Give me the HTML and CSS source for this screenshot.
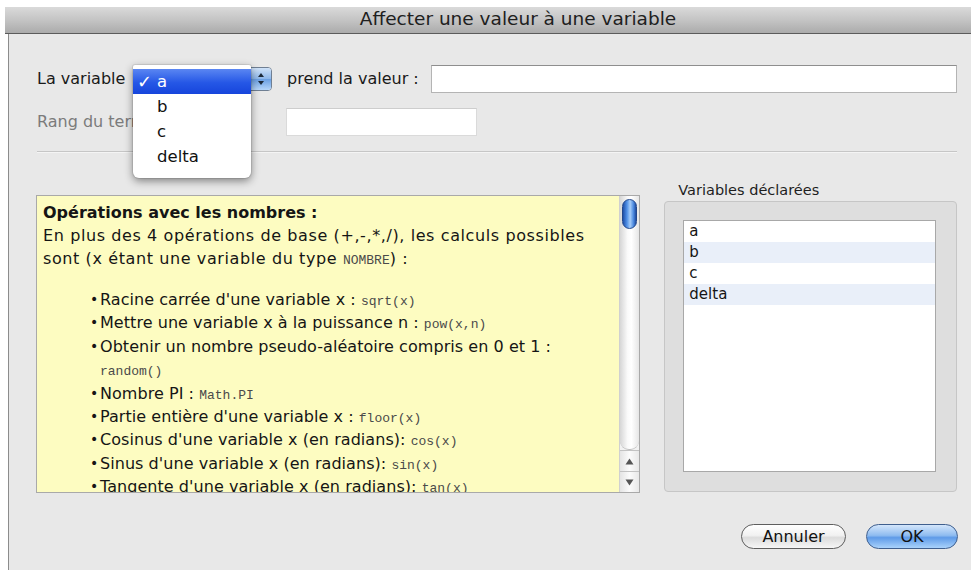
FILE: index.html
```html
<!DOCTYPE html>
<html lang="fr">
<head>
<meta charset="utf-8">
<title>Affecter une valeur à une variable</title>
<link rel="stylesheet" href="styles.css">
</head>
<body>
<div class="screen">
  <div class="window">
    <div class="titlebar">Affecter une valeur à une variable</div>
    <div class="content">
      <div class="form-row row-var">
        <span class="label label-var">La variable</span>
        <div class="popup">
          <span class="popup-value">a</span>
          <span class="popup-arrows">
            <svg width="8" height="14" viewBox="0 0 8 14"><path d="M4 1 L7 5 L1 5 Z" fill="#1d2a3a"/><path d="M4 13 L7 9 L1 9 Z" fill="#1d2a3a"/></svg>
          </span>
          <ul class="menu">
            <li class="menu-item selected"><span class="check">✓</span>a</li>
            <li class="menu-item">b</li>
            <li class="menu-item">c</li>
            <li class="menu-item">delta</li>
          </ul>
        </div>
        <span class="label label-value">prend la valeur :</span>
        <div class="field field-wide"></div>
      </div>
      <div class="form-row row-rank">
        <span class="label label-rank">Rang du terme de la liste :</span>
        <div class="field field-rank"></div>
      </div>
      <div class="separator"></div>
      <div class="lower">
        <div class="help">
          <div class="help-text">
            <p class="help-title">Opérations avec les nombres :</p>
            <p class="help-intro">En plus des 4 opérations de base (+,-,*,/), les calculs possibles sont (x étant une variable du type <code>NOMBRE</code>) :</p>
            <ul class="help-list">
              <li>Racine carrée d'une variable x : <code>sqrt(x)</code></li>
              <li>Mettre une variable x à la puissance n : <code>pow(x,n)</code></li>
              <li>Obtenir un nombre pseudo-aléatoire compris en 0 et 1 : <code>random()</code></li>
              <li>Nombre PI : <code>Math.PI</code></li>
              <li>Partie entière d'une variable x : <code>floor(x)</code></li>
              <li>Cosinus d'une variable x (en radians): <code>cos(x)</code></li>
              <li>Sinus d'une variable x (en radians): <code>sin(x)</code></li>
              <li>Tangente d'une variable x (en radians): <code>tan(x)</code></li>
              <li>Arrondir une variable x : <code>round(x)</code></li>
            </ul>
          </div>
          <div class="scrollbar">
            <div class="scroll-track"><div class="scroll-thumb"></div></div>
            <div class="scroll-btn">
              <svg width="9" height="7" viewBox="0 0 9 7"><path d="M4.5 0.5 L8.5 6.5 L0.5 6.5 Z" fill="#555"/></svg>
            </div>
            <div class="scroll-btn">
              <svg width="9" height="7" viewBox="0 0 9 7"><path d="M4.5 6.5 L8.5 0.5 L0.5 0.5 Z" fill="#555"/></svg>
            </div>
          </div>
        </div>
        <div class="vars">
          <div class="vars-title">Variables déclarées</div>
          <div class="vars-group">
            <ul class="vars-list">
              <li>a</li>
              <li class="alt">b</li>
              <li>c</li>
              <li class="alt">delta</li>
            </ul>
          </div>
        </div>
      </div>
      <div class="buttons">
        <button class="btn btn-cancel">Annuler</button>
        <button class="btn btn-ok">OK</button>
      </div>
    </div>
  </div>
</div>
</body>
</html>
```
FILE: styles.css
```css
* { box-sizing: border-box; }

html, body {
  margin: 0;
  padding: 0;
  background: #ffffff;
  width: 971px;
  height: 570px;
  overflow: hidden;
}

body {
  font-family: "DejaVu Sans", "Liberation Sans", sans-serif;
  color: #1a1a1a;
}

.screen {
  padding: 7px 0 0 5px;
  height: 570px;
}

.window {
  height: 563px;
  display: flex;
  flex-direction: column;
}

.titlebar {
  height: 27px;
  flex: none;
  background: linear-gradient(#dadada, #c4c4c4 50%, #ababab);
  border-bottom: 1px solid #5b5b5b;
  text-align: center;
  font-size: 18.5px;
  line-height: 24px;
  color: #202020;
  padding-left: 60px;
}

.content {
  flex: 1;
  margin-left: 3px;
  border-left: 1px solid #8c8c8c;
  background: #e8e8e8;
  padding: 30px 14px 0 28px;
}

/* form rows */
.form-row {
  display: flex;
  align-items: center;
  height: 29px;
}

.label {
  font-size: 16px;
  white-space: nowrap;
}

.label-var { width: 96px; }

.popup {
  position: relative;
  width: 139px;
  height: 24px;
  border: 1px solid #6f7f93;
  border-radius: 4px;
  background: #fff;
  display: flex;
}

.popup-value {
  flex: 1;
  font-size: 16px;
  padding-left: 10px;
  line-height: 22px;
}

.popup-arrows {
  width: 21px;
  display: flex;
  align-items: center;
  justify-content: center;
  border-left: 1px solid #5d7fa8;
  border-radius: 0 3px 3px 0;
  background: linear-gradient(#cfe2f8, #8cb6ea 50%, #6a9fe2 51%, #b5d6fa);
}

.menu {
  position: absolute;
  left: -1px;
  top: -3px;
  width: 118px;
  margin: 0;
  padding: 4px 0 9px;
  list-style: none;
  background: #fff;
  border-radius: 2px 2px 6px 6px;
  box-shadow: 0 3px 9px rgba(0, 0, 0, 0.45), 0 0 0 1px rgba(0, 0, 0, 0.08);
  z-index: 2;
}

.menu-item {
  position: relative;
  height: 25px;
  line-height: 25px;
  padding-left: 24px;
  font-size: 16.5px;
  color: #111;
}

.menu-item.selected {
  background: linear-gradient(#5a86f2, #2557e6 55%, #1645dc);
  color: #fff;
}

.check {
  position: absolute;
  left: 4px;
  top: 0;
  font-size: 18px;
  font-weight: bold;
}

.label-value {
  margin-left: 15px;
  width: 144px;
}

.field {
  height: 28px;
  background: #fff;
  border: 1px solid #b4b4b4;
  border-top-color: #8e8e8e;
}

.field-wide { flex: 1; }

.row-rank { margin-top: 14px; }

.label-rank {
  width: 249px;
  color: #7b7b7b;
}

.field-rank {
  width: 191px;
  border-color: #dadada;
  border-top-color: #cdcdcd;
}

.separator {
  margin-top: 15px;
  height: 1px;
  background: #c6c6c6;
  border-bottom: 1px solid #f4f4f4;
  box-sizing: content-box;
}

/* lower area */
.lower {
  display: flex;
  gap: 24px;
  margin-top: 29px;
}

.help {
  margin-top: 13px;
  margin-left: -1px;
  width: 605px;
  height: 298px;
  border: 1px solid #a9a9a9;
  background: #fdfcc1;
  display: flex;
  overflow: hidden;
}

.help-text {
  flex: 1;
  padding: 5px 8px 0 6px;
  font-size: 16px;
  line-height: 23px;
  color: #151515;
  overflow: hidden;
}

.help-text p { margin: 0; }

.help-title { font-weight: bold; }

.help-intro { letter-spacing: 0.6px; }

.help-text code {
  font-family: "Liberation Mono", "DejaVu Sans Mono", monospace;
  font-size: 13px;
  line-height: 1;
  letter-spacing: 0;
  color: #4a4a4a;
}

.help-list {
  list-style: none;
  margin: 18px 0 0;
  padding: 0 0 0 57px;
  line-height: 23.4px;
  letter-spacing: 0.05px;
}

.help-list li {
  position: relative;
}

.help-list li::before {
  content: "•";
  position: absolute;
  left: -10px;
  font-size: 14px;
  line-height: 23.4px;
}

.scrollbar {
  width: 20px;
  flex: none;
  border-left: 1px solid #d0d0d0;
  background: #f2f2f2;
  display: flex;
  flex-direction: column;
}

.scroll-track {
  flex: 1;
  padding: 3px 2px 0 2px;
  background: linear-gradient(90deg, #d6d6d6, #fafafa 40%, #fff 60%, #e6e6e6);
  border-radius: 0 0 9px 9px;
  border-bottom: 1px solid #bdbdbd;
}

.scroll-thumb {
  height: 30px;
  border-radius: 8px;
  background: linear-gradient(90deg, #1f4fa8, #4f8fe6 30%, #a7cdf8 55%, #4e8be0 80%, #1f4ca0);
  border: 1px solid #23488c;
}

.scroll-btn {
  height: 21px;
  display: flex;
  align-items: center;
  justify-content: center;
  background: linear-gradient(90deg, #e4e4e4, #fbfbfb 50%, #e8e8e8);
  border-top: 1px solid #c2c2c2;
}

.vars {
  width: 293px;
}

.vars-title {
  font-size: 14.5px;
  height: 19px;
  line-height: 16px;
  padding-left: 14px;
  color: #1e1e1e;
}

.vars-group {
  height: 291px;
  background: #dedede;
  border: 1px solid #c6c6c6;
  border-radius: 4px;
  padding: 18px 20px 19px 18px;
}

.vars-list {
  list-style: none;
  margin: 0;
  padding: 0;
  height: 100%;
  background: #fff;
  border: 1px solid #a8a8a8;
}

.vars-list li {
  height: 21px;
  line-height: 21px;
  padding-left: 5px;
  font-size: 15px;
  color: #151515;
}

.vars-list li.alt { background: #e9eff9; }

/* dialog buttons */
.buttons {
  display: flex;
  justify-content: flex-end;
  gap: 20px;
  margin-top: 31px;
  margin-right: -1px;
}

.btn {
  height: 25px;
  border-radius: 13px;
  font-family: "DejaVu Sans", "Liberation Sans", sans-serif;
  font-size: 16px;
  color: #111;
  padding: 0;
}

.btn-cancel {
  width: 105px;
  border: 1px solid #5e5e5e;
  background: linear-gradient(#ffffff, #f1f1f1 45%, #dcdcdc 55%, #f6f6f6);
}

.btn-ok {
  width: 92px;
  border: 1px solid #3f5f8e;
  background: linear-gradient(#d4e6fb, #8fbcf0 45%, #5f9be8 55%, #a9d2fb);
}
```
